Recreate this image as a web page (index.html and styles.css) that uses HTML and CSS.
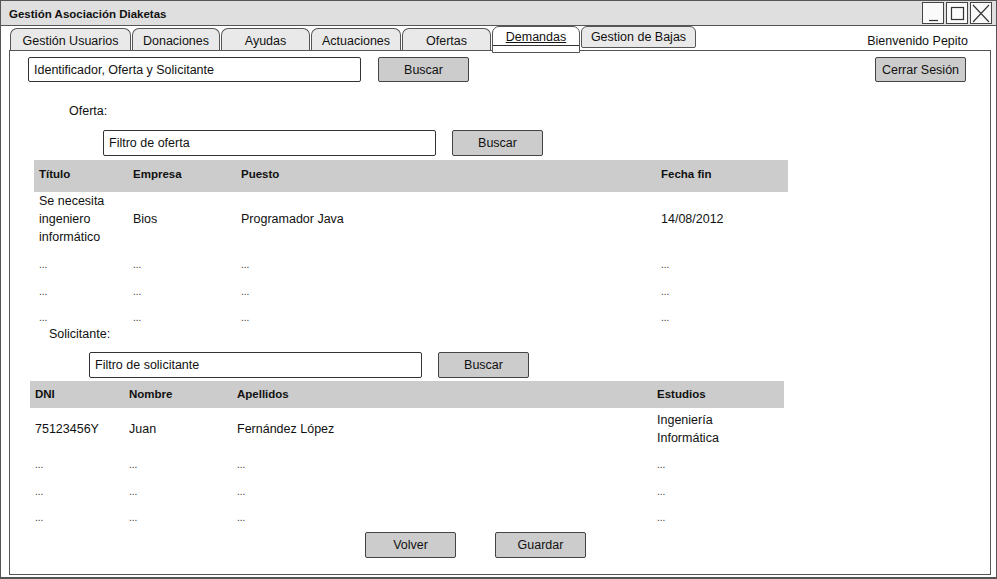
FILE: index.html
```html
<!DOCTYPE html>
<html lang="es">
<head>
<meta charset="utf-8">
<title>Gestión Asociación Diaketas</title>
<link rel="stylesheet" href="styles.css">
</head>
<body>
<div class="window">
  <div class="titlebar">
    <span class="title">Gestión Asociación Diaketas</span>
    <div class="winbtns">
      <span class="wb"><svg width="19" height="19" viewBox="0 0 19 19"><path d="M5 16.5 H14" stroke="#333" stroke-width="1.2" fill="none"/></svg></span>
      <span class="wb"><svg width="19" height="19" viewBox="0 0 19 19"><rect x="3.5" y="3.5" width="12" height="12" stroke="#333" stroke-width="1.2" fill="none"/></svg></span>
      <span class="wb"><svg width="20" height="19" viewBox="0 0 20 19"><path d="M2 1 L18 18 M18 1 L2 18" stroke="#333" stroke-width="1.1" fill="none"/></svg></span>
    </div>
  </div>
  <div class="tabsrow">
    <span class="tab w-gu">Gestión Usuarios</span>
    <span class="tab w-do">Donaciones</span>
    <span class="tab w-ay">Ayudas</span>
    <span class="tab w-ac">Actuaciones</span>
    <span class="tab w-of">Ofertas</span>
    <span class="tab active w-de"><span class="tablabel">Demandas</span></span>
    <span class="tab short w-gb">Gestion de Bajas</span>
    <span class="welcome">Bienvenido Pepito</span>
  </div>
  <div class="panel">
    <div class="toprow">
      <div class="input main">Identificador, Oferta y Solicitante</div>
      <div class="btn">Buscar</div>
      <div class="btn logout">Cerrar Sesión</div>
    </div>

    <div class="label lbl-oferta">Oferta:</div>
    <div class="filter f-oferta">
      <div class="input">Filtro de oferta</div>
      <div class="btn">Buscar</div>
    </div>
    <div class="table t-oferta">
      <div class="thead"><span>Título</span><span>Empresa</span><span>Puesto</span><span>Fecha fin</span></div>
      <div class="trow multi r-first1">
        <span>Se necesita<br>ingeniero<br>informático</span><span>Bios</span><span>Programador Java</span><span>14/08/2012</span>
      </div>
      <div class="trow dots d1"><span>...</span><span>...</span><span>...</span><span>...</span></div>
      <div class="trow dots d2"><span>...</span><span>...</span><span>...</span><span>...</span></div>
      <div class="trow dots d3"><span>...</span><span>...</span><span>...</span><span>...</span></div>
    </div>

    <div class="label lbl-sol">Solicitante:</div>
    <div class="filter f-sol">
      <div class="input">Filtro de solicitante</div>
      <div class="btn">Buscar</div>
    </div>
    <div class="table t-sol">
      <div class="thead h2"><span>DNI</span><span>Nombre</span><span>Apellidos</span><span>Estudios</span></div>
      <div class="trow multi r-first2">
        <span>75123456Y</span><span>Juan</span><span>Fernández López</span><span>Ingeniería<br>Informática</span>
      </div>
      <div class="trow dots d1"><span>...</span><span>...</span><span>...</span><span>...</span></div>
      <div class="trow dots d2"><span>...</span><span>...</span><span>...</span><span>...</span></div>
      <div class="trow dots d3"><span>...</span><span>...</span><span>...</span><span>...</span></div>
    </div>

    <div class="actions">
      <div class="btn">Volver</div>
      <div class="btn">Guardar</div>
    </div>
  </div>
</div>
</body>
</html>
```

FILE: styles.css
```css
* { box-sizing: border-box; }
html, body { margin: 0; padding: 0; background: #fff; }
body {
  font-family: "Liberation Sans", Arial, sans-serif;
  font-size: 12.5px;
  color: #111;
}
.window {
  width: 997px;
  height: 579px;
  border: 1px solid #555;
  border-bottom-width: 2px;
  display: flex;
  flex-direction: column;
  background: #fff;
}
.titlebar {
  height: 25px;
  background: #dfdfdf;
  border-bottom: 1px solid #555;
  display: flex;
  align-items: center;
  padding-left: 8px;
}
.title {
  font-weight: bold;
  font-size: 11.5px;
  flex: 1;
  padding-top: 1px;
}
.winbtns {
  display: flex;
  gap: 2px;
  margin-right: 4px;
  align-self: flex-start;
  margin-top: 1px;
}
.wb {
  width: 22px;
  height: 22px;
  border: 1px solid #444;
  background: #fafafa;
  display: flex;
  align-items: center;
  justify-content: center;
}
.tabsrow {
  height: 24px;
  display: flex;
  align-items: flex-end;
  padding-left: 9px;
  gap: 1px;
}
.tab {
  height: 22px;
  background: #e9e9e9;
  border: 1px solid #555;
  border-bottom: none;
  border-radius: 7px 7px 0 0;
  display: flex;
  align-items: center;
  justify-content: center;
  padding-top: 2px;
  white-space: nowrap;
}
.w-gu { width: 121px; }
.w-do { width: 88px; }
.w-ay { width: 89px; }
.w-ac { width: 90px; }
.w-of { width: 89px; }
.w-de { width: 88px; }
.w-gb { width: 115px; }
.tab.active {
  background: #fff;
  height: 27px;
  margin-bottom: -3px;
  border-bottom: 1px solid #555;
  position: relative;
  z-index: 1;
  flex-direction: column;
  justify-content: flex-start;
  padding-top: 0;
}
.tablabel {
  display: block;
  width: 100%;
  text-align: center;
  text-decoration: underline;
  border-bottom: 1.5px solid #333;
  height: 19px;
  line-height: 20px;
}
.tab.short {
  height: 22px;
  align-self: flex-end;
  margin-bottom: 2px;
  border-bottom: 1px solid #555;
  padding-top: 0;
  border-radius: 6px 6px 2px 2px;
}
.welcome {
  margin-left: auto;
  margin-right: 28px;
  align-self: center;
  padding-top: 5px;
}
.panel {
  flex: 1;
  margin: 0 5px 2px 8px;
  border: 1px solid #555;
  border-bottom-width: 1.5px;
  display: flex;
  flex-direction: column;
}
.input {
  height: 25px;
  border: 1px solid #333;
  border-radius: 2px;
  background: #fff;
  padding-left: 5px;
  display: flex;
  align-items: center;
  width: 333px;
  color: #111;
}
.btn {
  height: 25px;
  width: 91px;
  background: #cccccc;
  border: 1px solid #444;
  border-radius: 2px;
  display: flex;
  align-items: center;
  justify-content: center;
  color: #111;
}
.toprow {
  display: flex;
  margin-top: 6px;
  padding-left: 18px;
  padding-right: 24px;
  gap: 17px;
}
.toprow .logout { margin-left: auto; }
.label { line-height: 18px; }
.lbl-oferta { margin-top: 20px; padding-left: 59px; }
.filter {
  display: flex;
  gap: 16px;
}
.filter .input, .filter .btn { height: 26px; }
.f-oferta { margin-top: 10px; padding-left: 93px; }
.table { width: 754px; }
.t-oferta { margin-left: 24px; margin-top: 4px; }
.thead, .trow {
  display: grid;
  grid-template-columns: 94px 108px 420px 1fr;
  padding-left: 5px;
}
.thead {
  background: #cccccc;
  font-weight: bold;
  font-size: 11.5px;
  height: 32px;
  line-height: 18px;
  padding-top: 5px;
}
.trow { line-height: 18px; align-items: center; }
.r-first1 { margin-top: 0; }
.dots span { font-size: 10px; color: #333; letter-spacing: 0; }
.t-oferta .d1 { margin-top: 10px; }
.t-oferta .d2 { margin-top: 9px; }
.t-oferta .d3 { margin-top: 8px; }
.lbl-sol { margin-top: 0; padding-left: 39px; line-height: 14px; }
.f-sol { margin-top: 11px; padding-left: 79px; }
.t-sol { margin-left: 20px; margin-top: 3px; }
.h2 { height: 27px; padding-top: 4px; }
.r-first2 { margin-top: 3px; }
.t-sol .d1 { margin-top: 9px; }
.t-sol .d2 { margin-top: 9px; }
.t-sol .d3 { margin-top: 8px; }
.actions {
  display: flex;
  gap: 39px;
  margin-top: 5px;
  padding-left: 355px;
}
.actions .btn { height: 26px; }
```
